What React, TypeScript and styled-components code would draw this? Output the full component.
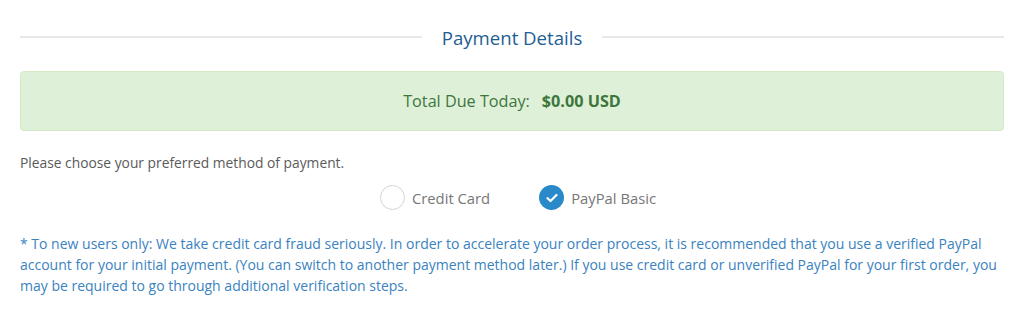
import React, { useState } from "react";
import styled, { createGlobalStyle } from "styled-components";

const Global = createGlobalStyle`
  body {
    margin: 0;
    background: #fff;
    font-family: "Open Sans", "Liberation Sans", sans-serif;
  }
`;

const Page = styled.div`
  padding: 20px 20px 0;
`;

const Heading = styled.div`
  display: flex;
  align-items: center;
  gap: 20px;
  height: 34px;
  &::before,
  &::after {
    content: "";
    flex: 1;
    height: 2px;
    background: #e8e8e8;
  }
  > h2 {
    margin: 0;
    font-size: 18.6px;
    font-weight: 400;
    color: #1e5e93;
  }
`;

const DueBox = styled.div`
  margin-top: 17px;
  height: 58px;
  display: flex;
  align-items: center;
  justify-content: center;
  background: #dff0d8;
  border: 1px solid #d6e9c6;
  border-radius: 4px;
  color: #3c763d;
  font-size: 16.2px;
  > b {
    margin-left: 12px;
  }
`;

const Prompt = styled.p`
  margin: 22px 0 0;
  font-size: 13.8px;
  line-height: 20px;
  color: #5a5a5a;
`;

const Methods = styled.div`
  display: flex;
  justify-content: center;
  gap: 49px;
  margin-top: 12px;
  padding-left: 12px;
`;

const Method = styled.label`
  display: flex;
  align-items: center;
  gap: 7px;
  cursor: pointer;
  font-size: 14.8px;
  color: #777;
`;

const Dot = styled.span<{ $on: boolean }>`
  width: 25px;
  height: 25px;
  box-sizing: border-box;
  border-radius: 50%;
  border: ${(p) => (p.$on ? "none" : "1px solid #d4d4d4")};
  background: ${(p) => (p.$on ? "#2a8ac9" : "#fff")};
  display: flex;
  align-items: center;
  justify-content: center;
`;

const Note = styled.p`
  margin: 23px 0 0;
  font-size: 14px;
  line-height: 21px;
  color: #3a82c0;
`;

const methods = ["Credit Card", "PayPal Basic"];

export default function App() {
  const [picked, setPicked] = useState("PayPal Basic");
  return (
    <Page>
      <Global />
      <Heading>
        <h2>Payment Details</h2>
      </Heading>
      <DueBox>
        Total Due Today: <b>$0.00 USD</b>
      </DueBox>
      <Prompt>Please choose your preferred method of payment.</Prompt>
      <Methods>
        {methods.map((m) => (
          <Method key={m} onClick={() => setPicked(m)}>
            <Dot $on={picked === m}>
              {picked === m && (
                <svg width="12" height="10" viewBox="0 0 12 10">
                  <path d="M1.5 5.2 L4.5 8 L10.5 2" fill="none" stroke="#fff" strokeWidth="2.2" strokeLinecap="round" strokeLinejoin="round" />
                </svg>
              )}
            </Dot>
            {m}
          </Method>
        ))}
      </Methods>
      <Note>
        * To new users only: We take credit card fraud seriously. In order to accelerate your order process, it is recommended that you use a verified PayPal account for your initial payment. (You can switch to another payment method later.) If you use credit card or unverified PayPal for your first order, you may be required to go through additional verification steps.
      </Note>
    </Page>
  );
}
